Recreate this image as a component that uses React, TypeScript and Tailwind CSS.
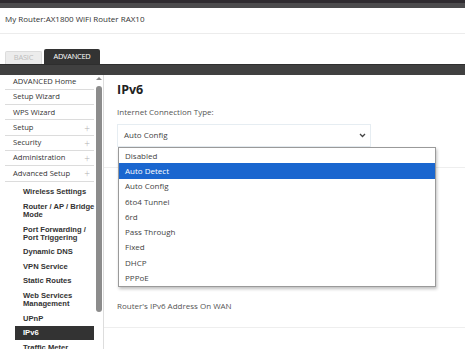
import React from "react";

const topItems: { label: string; plus?: boolean }[] = [
  { label: "ADVANCED Home" },
  { label: "Setup Wizard" },
  { label: "WPS Wizard" },
  { label: "Setup", plus: true },
  { label: "Security", plus: true },
  { label: "Administration", plus: true },
  { label: "Advanced Setup", plus: true },
];

const subItems: { label: string[]; active?: boolean }[] = [
  { label: ["Wireless Settings"] },
  { label: ["Router / AP / Bridge", "Mode"] },
  { label: ["Port Forwarding /", "Port Triggering"] },
  { label: ["Dynamic DNS"] },
  { label: ["VPN Service"] },
  { label: ["Static Routes"] },
  { label: ["Web Services", "Management"] },
  { label: ["UPnP"] },
  { label: ["IPv6"], active: true },
  { label: ["Traffic Meter"] },
];

const options = [
  "Disabled",
  "Auto Detect",
  "Auto Config",
  "6to4 Tunnel",
  "6rd",
  "Pass Through",
  "Fixed",
  "DHCP",
  "PPPoE",
];

export default function App() {
  return (
    <div
      className="relative w-[465px] h-[349px] overflow-hidden bg-white text-[#333]"
      style={{ fontFamily: '"Open Sans", "Noto Sans", sans-serif' }}
    >
      {/* top strip */}
      <div className="h-[3px] bg-[#2f2b30]" />
      <div className="h-[5px] bg-[#4c4b4d]" />
      {/* header */}
      <div className="h-[26px] border-b border-[#ececec] pl-[5px] pt-[5px] text-[8px] leading-[12px] text-[#333]">
        My Router:AX1800 WiFi Router RAX10
      </div>
      {/* tabs */}
      <div className="flex items-end gap-[2px] pl-[5px] pt-[15px]">
        <div className="w-[37px] h-[13px] bg-[#ececec] border border-[#dcdcdc] border-b-0 rounded-t-[2px] flex items-center justify-center text-[7.5px] text-[#bdbdbd] tracking-[-0.2px]">
          BASIC
        </div>
        <div className="w-[56px] h-[14.5px] bg-[#333333] rounded-t-[2px] flex items-center justify-center text-[7.5px] text-white tracking-[-0.3px]">
          ADVANCED
        </div>
      </div>
      <div className="h-[11px] bg-[#404040] border-t border-[#2e2e2e]" />

      {/* main */}
      <div className="flex">
        {/* sidebar */}
        <div className="relative w-[104px] shrink-0 pl-[5px] border-r border-[#dddddd] h-[280px]">
          <div className="w-[89px]">
            {topItems.map((it) => (
              <div
                key={it.label}
                className="h-[15.3px] border-b border-[#dcdcdc] flex items-center justify-between pl-[8px] pr-[4px] text-[7.6px] text-[#333]"
              >
                <span>{it.label}</span>
                {it.plus && <span className="text-[10px] leading-none text-[#b0b0b0] font-light">+</span>}
              </div>
            ))}
            <div className="pt-[3.5px]">
              {subItems.map((it) => (
                <div
                  key={it.label[0]}
                  className={
                    "ml-[10px] pl-[8px] py-[3.3px] text-[7.6px] leading-[8px] font-bold whitespace-nowrap " +
                    (it.active ? "bg-[#333333] text-white" : "text-[#333]")
                  }
                  style={{ fontFamily: '"Liberation Sans", Arial, sans-serif' }}
                >
                  {it.label.map((l) => (
                    <div key={l}>{l}</div>
                  ))}
                </div>
              ))}
            </div>
          </div>
          {/* scrollbar */}
          <div className="absolute left-[96px] top-[2px] w-[6px] h-[240px]">
            <div className="mx-auto w-0 h-0 border-l-[3px] border-r-[3px] border-b-[3px] border-l-transparent border-r-transparent border-b-[#8a8a8a]" />
            <div className="mt-[6px] w-[6px] h-[226px] rounded-[3px] bg-[#8c8c8c]" />
          </div>
        </div>

        {/* content */}
        <div className="flex-1">
          <div className="pl-[13px] pt-[6px]">
            <div className="text-[12.5px] leading-[18px] font-bold text-[#222]">IPv6</div>
            <div className="mt-[8px] text-[8px] leading-[10px] text-[#555]">Internet Connection Type:</div>
            <div className="mt-[7px] w-[254px] h-[23.5px] border border-[#e6edf2] flex items-center justify-between pl-[6px] pr-[4px] text-[8px] text-[#444]">
              <span>Auto Config</span>
              <svg width="7" height="5" viewBox="0 0 7 5">
                <path d="M1 1 L3.5 3.5 L6 1" fill="none" stroke="#444" strokeWidth="1.3" />
              </svg>
            </div>
          </div>
          <div className="mt-[20px] border-t border-[#eeeeee]" />
          <div className="h-[133px]" />
          <div className="pl-[13px] text-[8px] leading-[10px] text-[#555]">Router's IPv6 Address On WAN</div>
          <div className="mt-[16px] border-t border-[#eeeeee]" />
        </div>
      </div>

      {/* open dropdown list */}
      <div className="absolute left-[118px] top-[147px] w-[318px] bg-white border border-[#9a9a9a] shadow-[1px_2px_3px_rgba(0,0,0,0.25)]">
        {options.map((o) => (
          <div
            key={o}
            className={
              "h-[15.3px] flex items-center pl-[6px] text-[8px] " +
              (o === "Auto Detect" ? "bg-[#1a66cf] text-white" : "text-[#444]")
            }
          >
            {o}
          </div>
        ))}
      </div>
    </div>
  );
}
